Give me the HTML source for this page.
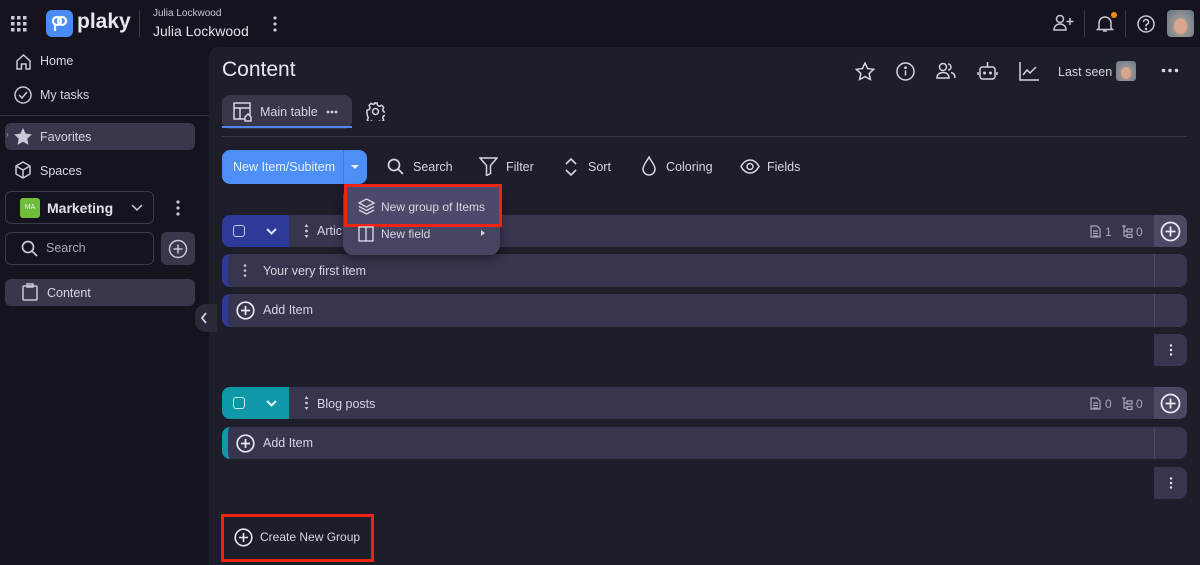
<!DOCTYPE html>
<html><head><meta charset="utf-8"><style>
*{box-sizing:border-box;margin:0;padding:0}
body{width:1200px;height:565px;overflow:hidden;background:#15141e;font-family:"Liberation Sans",sans-serif;color:#d6d5e2;position:relative}
.a{position:absolute}
svg{display:block}
.t{font-size:12.5px;color:#d6d5e2}
.row{position:absolute;left:222px;width:965px;background:#37364f;border-radius:8px}
.plusc{position:absolute;right:0;top:0;width:33px;height:100%;border-left:1px solid #4a4963}
</style></head><body>
<!-- top bar -->
<svg class="a" style="left:11px;top:16px" width="16" height="16" fill="#c9c8d6"><g><rect x="0" y="0" width="3.5" height="3.5"/><rect x="6" y="0" width="3.5" height="3.5"/><rect x="12" y="0" width="3.5" height="3.5"/><rect x="0" y="6" width="3.5" height="3.5"/><rect x="6" y="6" width="3.5" height="3.5"/><rect x="12" y="6" width="3.5" height="3.5"/><rect x="0" y="12" width="3.5" height="3.5"/><rect x="6" y="12" width="3.5" height="3.5"/><rect x="12" y="12" width="3.5" height="3.5"/></g></svg>
<div class="a" style="left:46px;top:10px;width:27px;height:27px;background:#4b8bf5;border-radius:6px"></div>
<svg class="a" style="left:49px;top:13px" width="21" height="21" fill="none" stroke="#fff" stroke-width="2.2"><circle cx="8" cy="8" r="4"/><circle cx="13" cy="8" r="4"/><path d="M6 12v6"/></svg>
<div class="a" style="left:77px;top:10px;font-size:21px;font-weight:bold;color:#e8e7f0">plaky</div>
<div class="a" style="left:139px;top:10px;width:1px;height:27px;background:#3a3948"></div>
<div class="a" style="left:153px;top:8px;font-size:10px;color:#c9c8d6">Julia Lockwood</div>
<div class="a" style="left:153px;top:23px;font-size:14px;color:#e2e1ea">Julia Lockwood</div>
<svg class="a" style="left:272px;top:16px" width="6" height="16" fill="#c9c8d6"><circle cx="3" cy="2" r="1.6"/><circle cx="3" cy="8" r="1.6"/><circle cx="3" cy="14" r="1.6"/></svg>
<svg class="a" style="left:1053px;top:14px" width="22" height="18" fill="none" stroke="#c9c8d6" stroke-width="1.5"><circle cx="7" cy="5" r="3.5"/><path d="M1 16c0-4 3-6 6-6s6 2 6 6z"/><path d="M17 4v7M13.5 7.5h7"/></svg>
<div class="a" style="left:1084px;top:10px;width:1px;height:27px;background:#3a3948"></div>
<svg class="a" style="left:1096px;top:14px" width="18" height="19" fill="none" stroke="#c9c8d6" stroke-width="1.5"><path d="M3 14V9a6 6 0 0 1 12 0v5l1.5 1.5h-15z"/><path d="M7 17h4"/></svg>
<div class="a" style="left:1111px;top:12px;width:6px;height:6px;border-radius:50%;background:#f48a1c"></div>
<div class="a" style="left:1125px;top:10px;width:1px;height:27px;background:#3a3948"></div>
<svg class="a" style="left:1137px;top:15px" width="18" height="18" fill="none" stroke="#c9c8d6" stroke-width="1.5"><circle cx="9" cy="9" r="8"/><path d="M6.5 7a2.5 2.5 0 1 1 3.5 2.3c-.7.3-1 .8-1 1.5v.7"/><circle cx="9" cy="14" r=".5" fill="#c9c8d6"/></svg>
<div class="a" style="left:1167px;top:10px;width:27px;height:27px;border-radius:4px;background:radial-gradient(ellipse at 50% 60%,#d9a58c 0 32%,#9a9590 38%,#5f7686 100%)"></div>
<!-- sidebar -->
<svg class="a" style="left:15px;top:53px" width="17" height="17" fill="none" stroke="#c9c8d6" stroke-width="1.5"><path d="M2 8l6.5-6 6.5 6v8h-4v-5H6.5v5H2z"/></svg>
<div class="a t" style="left:40px;top:54px">Home</div>
<svg class="a" style="left:14px;top:86px" width="18" height="18" fill="none" stroke="#c9c8d6" stroke-width="1.5"><circle cx="9" cy="9" r="8"/><path d="M5 9l3 3 5-6"/></svg>
<div class="a t" style="left:40px;top:88px">My tasks</div>
<div class="a" style="left:0;top:115px;width:209px;height:1px;background:#33323f"></div>
<div class="a" style="left:5px;top:123px;width:190px;height:27px;background:#38374b;border-radius:6px"></div>
<div class="a" style="left:6px;top:130px;font-size:8px;color:#aaa">›</div>
<svg class="a" style="left:14px;top:128px" width="18" height="17" fill="#c9c8d6"><path d="M9 0l2.7 5.6 6.1.8-4.5 4.2 1.1 6.1L9 13.8 3.6 16.7l1.1-6.1L.2 6.4l6.1-.8z"/></svg>
<div class="a t" style="left:40px;top:130px">Favorites</div>
<svg class="a" style="left:14px;top:161px" width="18" height="18" fill="none" stroke="#c9c8d6" stroke-width="1.5"><path d="M9 1l7 4v8l-7 4-7-4V5z"/><path d="M2 5l7 4 7-4M9 9v8"/></svg>
<div class="a t" style="left:40px;top:164px">Spaces</div>
<div class="a" style="left:5px;top:191px;width:149px;height:33px;border:1px solid #3a3948;border-radius:6px"></div>
<div class="a" style="left:20px;top:198px;width:20px;height:20px;background:#6ebd3c;border-radius:3px;font-size:7px;color:#e8f5e0;text-align:center;line-height:20px">MA</div>
<div class="a" style="left:47px;top:200px;font-size:14px;font-weight:bold;color:#e2e1ea">Marketing</div>
<svg class="a" style="left:131px;top:204px" width="12" height="8" fill="none" stroke="#c9c8d6" stroke-width="1.5"><path d="M1 1l5 5 5-5"/></svg>
<svg class="a" style="left:175px;top:200px" width="6" height="16" fill="#c9c8d6"><circle cx="3" cy="2" r="1.6"/><circle cx="3" cy="8" r="1.6"/><circle cx="3" cy="14" r="1.6"/></svg>
<div class="a" style="left:5px;top:232px;width:149px;height:33px;border:1px solid #3a3948;border-radius:6px"></div>
<svg class="a" style="left:21px;top:240px" width="17" height="17" fill="none" stroke="#c9c8d6" stroke-width="1.7"><circle cx="7" cy="7" r="5.5"/><path d="M11 11l5 5"/></svg>
<div class="a t" style="left:46px;top:241px;color:#a9a8b8">Search</div>
<div class="a" style="left:161px;top:232px;width:34px;height:33px;background:#38374b;border-radius:6px"></div>
<svg class="a" style="left:168px;top:239px" width="20" height="20" fill="none" stroke="#c9c8d6" stroke-width="1.5"><circle cx="10" cy="10" r="8.5"/><path d="M10 5.5v9M5.5 10h9"/></svg>
<div class="a" style="left:5px;top:279px;width:190px;height:27px;background:#38374b;border-radius:6px"></div>
<svg class="a" style="left:22px;top:283px" width="16" height="18" fill="none" stroke="#c9c8d6" stroke-width="1.5"><rect x="1" y="3" width="14" height="14" rx="1"/><rect x="5" y="1" width="6" height="3"/></svg>
<div class="a t" style="left:47px;top:286px">Content</div>
<!-- main panel -->
<div class="a" style="left:209px;top:47px;width:991px;height:518px;background:#1e1d2a;border-top-left-radius:10px"></div>
<div class="a" style="left:195px;top:304px;width:22px;height:28px;background:#2b2a38;border-radius:11px 0 0 11px"></div>
<svg class="a" style="left:200px;top:312px" width="8" height="12" fill="none" stroke="#d6d5e2" stroke-width="1.8"><path d="M6 1L2 6l4 5"/></svg>
<div class="a" style="left:222px;top:58px;font-size:21px;color:#e8e7f0">Content</div>
<svg class="a" style="left:855px;top:62px" width="20" height="19" fill="none" stroke="#d6d5e2" stroke-width="1.5"><path d="M10 1l2.6 5.6 6.1.7-4.5 4.2 1.2 6L10 14.6 4.6 17.5l1.2-6L1.3 7.3l6.1-.7z"/></svg>
<svg class="a" style="left:896px;top:62px" width="19" height="19" fill="none" stroke="#d6d5e2" stroke-width="1.5"><circle cx="9.5" cy="9.5" r="8.5"/><path d="M9.5 8.5v5"/><circle cx="9.5" cy="5.7" r=".6" fill="#d6d5e2"/></svg>
<svg class="a" style="left:936px;top:62px" width="21" height="18" fill="none" stroke="#d6d5e2" stroke-width="1.5"><circle cx="7" cy="5" r="3.5"/><path d="M1 16c0-3.5 2.5-5.5 6-5.5s6 2 6 5.5z"/><path d="M12 2a3 3 0 0 1 0 6M15 10.5c2.5.5 4 2.5 4 5.5"/></svg>
<svg class="a" style="left:977px;top:60px" width="21" height="21" fill="none" stroke="#d6d5e2" stroke-width="1.5"><rect x="3" y="7" width="15" height="12" rx="2.5"/><path d="M10.5 2v5M1 12v3M20 12v3"/><circle cx="7.5" cy="13" r=".7" fill="#d6d5e2"/><circle cx="13.5" cy="13" r=".7" fill="#d6d5e2"/></svg>
<svg class="a" style="left:1019px;top:62px" width="20" height="19" fill="none" stroke="#d6d5e2" stroke-width="1.5"><path d="M1 0v18h19"/><path d="M4 13l4-5 3 3 6-6"/></svg>
<div class="a t" style="left:1058px;top:65px">Last seen</div>
<div class="a" style="left:1116px;top:61px;width:20px;height:20px;border-radius:3px;background:radial-gradient(ellipse at 50% 60%,#d9a58c 0 32%,#9a9590 38%,#5f7686 100%)"></div>
<svg class="a" style="left:1161px;top:68px" width="18" height="5" fill="#d6d5e2"><circle cx="2.5" cy="2.5" r="1.8"/><circle cx="9" cy="2.5" r="1.8"/><circle cx="15.5" cy="2.5" r="1.8"/></svg>
<!-- tab -->
<div class="a" style="left:222px;top:95px;width:130px;height:34px;background:#38374b;border-radius:8px"></div>
<svg class="a" style="left:233px;top:102px" width="21" height="21" fill="none" stroke="#d6d5e2" stroke-width="1.5"><rect x="1" y="1" width="16" height="16"/><path d="M1 6h16M7 6v11"/><path d="M12 15l3-3 3 3v4h-6z" fill="#38374b"/></svg>
<div class="a t" style="left:260px;top:105px">Main table</div>
<svg class="a" style="left:326px;top:110px" width="12" height="4" fill="#d6d5e2"><circle cx="2" cy="2" r="1.4"/><circle cx="6" cy="2" r="1.4"/><circle cx="10" cy="2" r="1.4"/></svg>
<svg class="a" style="left:366px;top:102px" width="19" height="19" fill="none" stroke="#d6d5e2" stroke-width="1.5"><circle cx="9.5" cy="9.5" r="3"/><path d="M8 1h3l.5 2.3 2 1 2.2-1 2 2.2-1 2.2.8 2 2.3.6v3l-2.3.6-.8 2 1 2.2-2 2-2.2-1-2 1-.5 2.3H8l-.5-2.3-2-1-2.2 1-2-2 1-2.2-.8-2L1 11.2v-3l2.3-.6.8-2-1-2.2 2-2 2.2 1 2-1z"/></svg>
<div class="a" style="left:222px;top:136px;width:965px;height:1px;background:#3a3948"></div>
<div class="a" style="left:222px;top:126px;width:130px;height:2px;background:#4e86f0"></div>
<!-- toolbar -->
<div class="a" style="left:222px;top:150px;width:145px;height:34px;background:#4d8ef7;border-radius:8px"></div>
<div class="a" style="left:343px;top:150px;width:1px;height:34px;background:#3f7ae0"></div>
<div class="a" style="left:233px;top:160px;font-size:12.5px;color:#eaf1ff">New Item/Subitem</div>
<div class="a" style="left:351px;top:165px;width:0;height:0;border-left:4px solid transparent;border-right:4px solid transparent;border-top:4px solid #eaf1ff"></div>
<svg class="a" style="left:387px;top:158px" width="17" height="17" fill="none" stroke="#d6d5e2" stroke-width="1.7"><circle cx="7" cy="7" r="5.5"/><path d="M11 11l5 5"/></svg>
<div class="a t" style="left:413px;top:160px">Search</div>
<svg class="a" style="left:479px;top:157px" width="19" height="19" fill="none" stroke="#d6d5e2" stroke-width="1.5"><path d="M1 1h17l-6.5 7.5v8l-4 2v-10z"/></svg>
<div class="a t" style="left:506px;top:160px">Filter</div>
<svg class="a" style="left:565px;top:158px" width="12" height="18" fill="none" stroke="#d6d5e2" stroke-width="1.6"><path d="M1 6l5-5 5 5M1 12l5 5 5-5"/></svg>
<div class="a t" style="left:588px;top:160px">Sort</div>
<svg class="a" style="left:642px;top:156px" width="14" height="20" fill="none" stroke="#d6d5e2" stroke-width="1.5"><path d="M7 1C5 5 1 9 1 13a6 6 0 0 0 12 0C13 9 9 5 7 1z"/></svg>
<div class="a t" style="left:666px;top:160px">Coloring</div>
<svg class="a" style="left:740px;top:159px" width="20" height="15" fill="none" stroke="#d6d5e2" stroke-width="1.5"><path d="M1 7.5C3.5 3 6.5 1 10 1s6.5 2 9 6.5C16.5 12 13.5 14 10 14S3.5 12 1 7.5z"/><circle cx="10" cy="7.5" r="3"/></svg>
<div class="a t" style="left:767px;top:160px">Fields</div>
<!-- group 1 -->
<div class="row" style="top:215px;height:32px"><div class="plusc" style="background:#4a4963;border-left:none;border-radius:0 8px 8px 0"></div></div>
<div class="a" style="left:222px;top:215px;width:67px;height:32px;background:#2d3a98;border-radius:8px 0 0 8px"></div>
<div class="a" style="left:233px;top:225px;width:12px;height:12px;border:1.5px solid #c9cdf0;border-radius:3px"></div>
<svg class="a" style="left:266px;top:228px" width="11" height="7" fill="none" stroke="#e0e3f8" stroke-width="2"><path d="M1 1l4.5 4.5L10 1"/></svg>
<svg class="a" style="left:304px;top:224px" width="5" height="14" fill="#c9c8d6"><path d="M2.5 0l2 3h-4z"/><circle cx="2.5" cy="7" r="1.4"/><path d="M2.5 14l2-3h-4z"/></svg>
<div class="a t" style="left:317px;top:224px">Artic</div>
<svg class="a" style="left:1090px;top:225px" width="11" height="13" fill="none" stroke="#a9a8b8" stroke-width="1.2"><path d="M1 1h6l3 3v8H1z M3 6h5M3 8.5h5M3 11h5"/></svg>
<div class="a" style="left:1105px;top:225px;font-size:12px;color:#a9a8b8">1</div>
<svg class="a" style="left:1121px;top:225px" width="12" height="13" fill="none" stroke="#a9a8b8" stroke-width="1.2"><path d="M1 1h4M3 1v10h3M3 6h3"/><rect x="6" y="4" width="5" height="3"/><rect x="6" y="9.5" width="5" height="3"/></svg>
<div class="a" style="left:1136px;top:225px;font-size:12px;color:#a9a8b8">0</div>
<svg class="a" style="left:1160px;top:221px" width="21" height="21" fill="none" stroke="#e8e7f0" stroke-width="1.8"><circle cx="10.5" cy="10.5" r="9"/><path d="M10.5 5.5v10M5.5 10.5h10"/></svg>
<div class="row" style="top:254px;height:33px;border-left:6px solid #2d3a98"><div class="plusc"></div></div>
<svg class="a" style="left:243px;top:264px" width="4" height="13" fill="#c9c8d6"><circle cx="2" cy="1.5" r="1.3"/><circle cx="2" cy="6.5" r="1.3"/><circle cx="2" cy="11.5" r="1.3"/></svg>
<div class="a t" style="left:263px;top:264px">Your very first item</div>
<div class="row" style="top:294px;height:33px;border-left:6px solid #2d3a98"><div class="plusc"></div></div>
<svg class="a" style="left:236px;top:301px" width="19" height="19" fill="none" stroke="#e8e7f0" stroke-width="1.7"><circle cx="9.5" cy="9.5" r="8.3"/><path d="M9.5 5v9M5 9.5h9"/></svg>
<div class="a t" style="left:263px;top:303px">Add Item</div>
<div class="a" style="left:1154px;top:334px;width:33px;height:32px;background:#37364f;border-radius:0 8px 8px 0"></div>
<svg class="a" style="left:1169px;top:344px" width="4" height="12" fill="#e8e7f0"><circle cx="2" cy="1.5" r="1.2"/><circle cx="2" cy="6" r="1.2"/><circle cx="2" cy="10.5" r="1.2"/></svg>
<!-- group 2 -->
<div class="row" style="top:387px;height:32px"><div class="plusc" style="background:#4a4963;border-left:none;border-radius:0 8px 8px 0"></div></div>
<div class="a" style="left:222px;top:387px;width:67px;height:32px;background:#0e98a8;border-radius:8px 0 0 8px"></div>
<div class="a" style="left:233px;top:397px;width:12px;height:12px;border:1.5px solid #c8ecf0;border-radius:3px"></div>
<svg class="a" style="left:266px;top:400px" width="11" height="7" fill="none" stroke="#e0f5f8" stroke-width="2"><path d="M1 1l4.5 4.5L10 1"/></svg>
<svg class="a" style="left:304px;top:396px" width="5" height="14" fill="#c9c8d6"><path d="M2.5 0l2 3h-4z"/><circle cx="2.5" cy="7" r="1.4"/><path d="M2.5 14l2-3h-4z"/></svg>
<div class="a t" style="left:317px;top:397px">Blog posts</div>
<svg class="a" style="left:1090px;top:397px" width="11" height="13" fill="none" stroke="#a9a8b8" stroke-width="1.2"><path d="M1 1h6l3 3v8H1z M3 6h5M3 8.5h5M3 11h5"/></svg>
<div class="a" style="left:1105px;top:397px;font-size:12px;color:#a9a8b8">0</div>
<svg class="a" style="left:1121px;top:397px" width="12" height="13" fill="none" stroke="#a9a8b8" stroke-width="1.2"><path d="M1 1h4M3 1v10h3M3 6h3"/><rect x="6" y="4" width="5" height="3"/><rect x="6" y="9.5" width="5" height="3"/></svg>
<div class="a" style="left:1136px;top:397px;font-size:12px;color:#a9a8b8">0</div>
<svg class="a" style="left:1160px;top:393px" width="21" height="21" fill="none" stroke="#e8e7f0" stroke-width="1.8"><circle cx="10.5" cy="10.5" r="9"/><path d="M10.5 5.5v10M5.5 10.5h10"/></svg>
<div class="row" style="top:427px;height:32px;border-left:6px solid #0e98a8"><div class="plusc"></div></div>
<svg class="a" style="left:236px;top:434px" width="19" height="19" fill="none" stroke="#e8e7f0" stroke-width="1.7"><circle cx="9.5" cy="9.5" r="8.3"/><path d="M9.5 5v9M5 9.5h9"/></svg>
<div class="a t" style="left:263px;top:436px">Add Item</div>
<div class="a" style="left:1154px;top:467px;width:33px;height:32px;background:#37364f;border-radius:0 8px 8px 0"></div>
<svg class="a" style="left:1169px;top:477px" width="4" height="12" fill="#e8e7f0"><circle cx="2" cy="1.5" r="1.2"/><circle cx="2" cy="6" r="1.2"/><circle cx="2" cy="10.5" r="1.2"/></svg>
<!-- create group -->
<div class="a" style="left:221px;top:514px;width:153px;height:48px;border:3px solid #f0230f"></div>
<svg class="a" style="left:234px;top:528px" width="19" height="19" fill="none" stroke="#e8e7f0" stroke-width="1.6"><circle cx="9.5" cy="9.5" r="8.3"/><path d="M9.5 5v9M5 9.5h9"/></svg>
<div class="a t" style="left:260px;top:530px;font-size:12px">Create New Group</div>
<!-- dropdown -->
<div class="a" style="left:343px;top:186px;width:157px;height:69px;background:#454461;border-radius:10px;box-shadow:0 4px 10px rgba(0,0,0,.4)"></div>
<div class="a" style="left:344px;top:184px;width:158px;height:43px;border:3px solid #f0230f;background:#4b4a6a"></div>
<svg class="a" style="left:358px;top:198px" width="17" height="17" fill="none" stroke="#d6d5e2" stroke-width="1.3"><path d="M8.5 1L16 5l-7.5 4L1 5z"/><path d="M1 8.5l7.5 4 7.5-4M1 12l7.5 4 7.5-4"/></svg>
<div class="a t" style="left:381px;top:200px;font-size:12px">New group of Items</div>
<svg class="a" style="left:358px;top:226px" width="16" height="16" fill="none" stroke="#d6d5e2" stroke-width="1.4"><rect x="1" y="1" width="14" height="14"/><path d="M8 1v14"/></svg>
<div class="a t" style="left:381px;top:227px;font-size:12px">New field</div>
<div class="a" style="left:481px;top:230px;width:0;height:0;border-top:3.5px solid transparent;border-bottom:3.5px solid transparent;border-left:4px solid #d6d5e2"></div>
</body></html>
